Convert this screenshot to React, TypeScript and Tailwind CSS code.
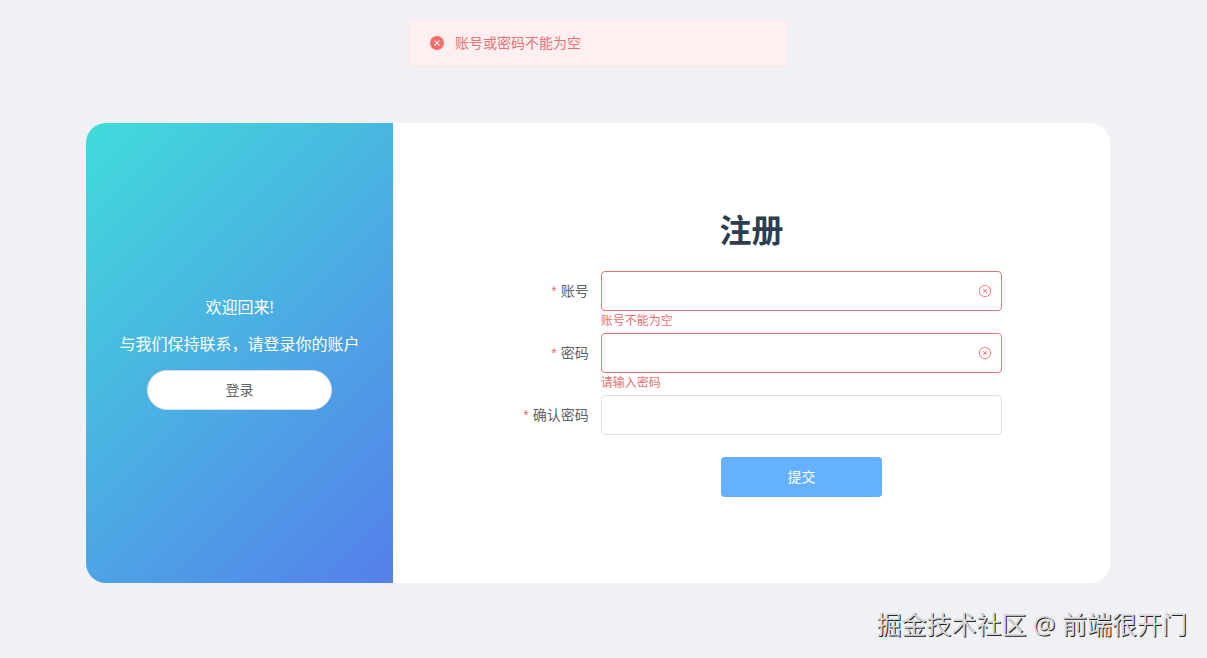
import { useId } from "react";

function FilledErrorIcon() {
  return (
    <svg viewBox="0 0 1024 1024" className="size-4 shrink-0" fill="#f56c6c" aria-hidden="true">
      <path d="M512 64a448 448 0 1 1 0 896 448 448 0 0 1 0-896zm0 393.664L407.936 353.6a38.4 38.4 0 1 0-54.336 54.336L457.664 512 353.6 616.064a38.4 38.4 0 1 0 54.336 54.336L512 566.336 616.064 670.4a38.4 38.4 0 1 0 54.336-54.336L566.336 512 670.4 407.936a38.4 38.4 0 1 0-54.336-54.336L512 457.664z" />
    </svg>
  );
}

function OutlineErrorIcon() {
  return (
    <svg viewBox="0 0 1024 1024" className="size-3.5 shrink-0" fill="#f56c6c" aria-hidden="true">
      <path d="m466.752 512-90.496-90.496a32 32 0 0 1 45.248-45.248L512 466.752l90.496-90.496a32 32 0 0 1 45.248 45.248L557.248 512l90.496 90.496a32 32 0 1 1-45.248 45.248L512 557.248l-90.496 90.496a32 32 0 0 1-45.248-45.248L466.752 512z" />
      <path d="M512 896a384 384 0 1 0 0-768 384 384 0 0 0 0 768zm0 64a448 448 0 1 1 0-896 448 448 0 0 1 0 896z" />
    </svg>
  );
}

type FieldProps = { label: string; type: string; error?: string };

function Field({ label, type, error }: FieldProps) {
  const id = useId();
  return (
    <div className="grid grid-cols-[100px_1fr] text-sm">
      <label htmlFor={id} className="h-10 pr-3 text-right leading-10 text-[#606266]">
        <span className="mr-1 font-['Liberation_Sans',sans-serif] text-[#e87070]">*</span>
        {label}
      </label>
      <div
        className={
          error
            ? "flex h-10 items-center rounded border border-[#dd7676] bg-white pr-[9px]"
            : "flex h-10 items-center rounded border border-[#dcdfe6] bg-white pr-[9px]"
        }
      >
        <input
          id={id}
          type={type}
          aria-invalid={Boolean(error)}
          aria-describedby={error ? id + "-error" : undefined}
          className="h-full min-w-0 flex-1 bg-transparent px-4 text-[#606266] outline-none"
        />
        {error && <OutlineErrorIcon />}
      </div>
      <p id={id + "-error"} className="col-start-2 h-[22px] text-xs leading-5 text-[#e87070]">
        {error}
      </p>
    </div>
  );
}

export default function App() {
  return (
    <main className="relative min-h-screen bg-[#eff1f4] pb-16 pl-4 pr-[27px] pt-[19px] font-['Open_Sans','Noto_Sans_CJK_SC',sans-serif]">
      <div
        role="alert"
        className="mx-auto flex h-12 w-full max-w-[380px] items-center gap-2.5 rounded border border-[#fde6e6] bg-[#fef0f0] px-5 text-sm text-[#e87070]"
      >
        <FilledErrorIcon />
        <p>账号或密码不能为空</p>
      </div>

      <div className="mx-auto mt-14 flex min-h-[460px] w-full max-w-[1024px] overflow-hidden rounded-[20px] bg-white">
        <section className="flex w-[30%] flex-col items-center justify-center bg-[linear-gradient(135deg,#41dbdb,#557feb)] text-white">
          <p className="mb-4 leading-[22px]">欢迎回来!</p>
          <p className="mb-4 leading-[20px]">与我们保持联系，请登录你的账户</p>
          <button
            type="button"
            className="h-10 w-[60%] rounded-full border border-[#dcdfe6] bg-white text-sm text-[#606266]"
          >
            登录
          </button>
        </section>

        <section className="flex flex-1 flex-col items-center justify-center">
          <h1 className="mb-5 mt-[21px] text-[32px] font-bold leading-[43px] text-[#2c3e50]">注册</h1>
          <form className="w-[70%]" noValidate onSubmit={(event) => event.preventDefault()}>
            <Field label="账号" type="text" error="账号不能为空" />
            <Field label="密码" type="password" error="请输入密码" />
            <Field label="确认密码" type="password" />
            <div className="mb-[22px] ml-[100px] flex justify-center">
              <button type="submit" className="h-10 w-[40%] rounded bg-[#66b1ff] text-sm text-white">
                提交
              </button>
            </div>
          </form>
        </section>
      </div>

      <p className="absolute bottom-4 right-5 text-[25px] leading-[36px] text-[#d8d8d8] [text-shadow:1px_1px_0_#222]">
        掘金技术社区 @ 前端很开门
      </p>
    </main>
  );
}
